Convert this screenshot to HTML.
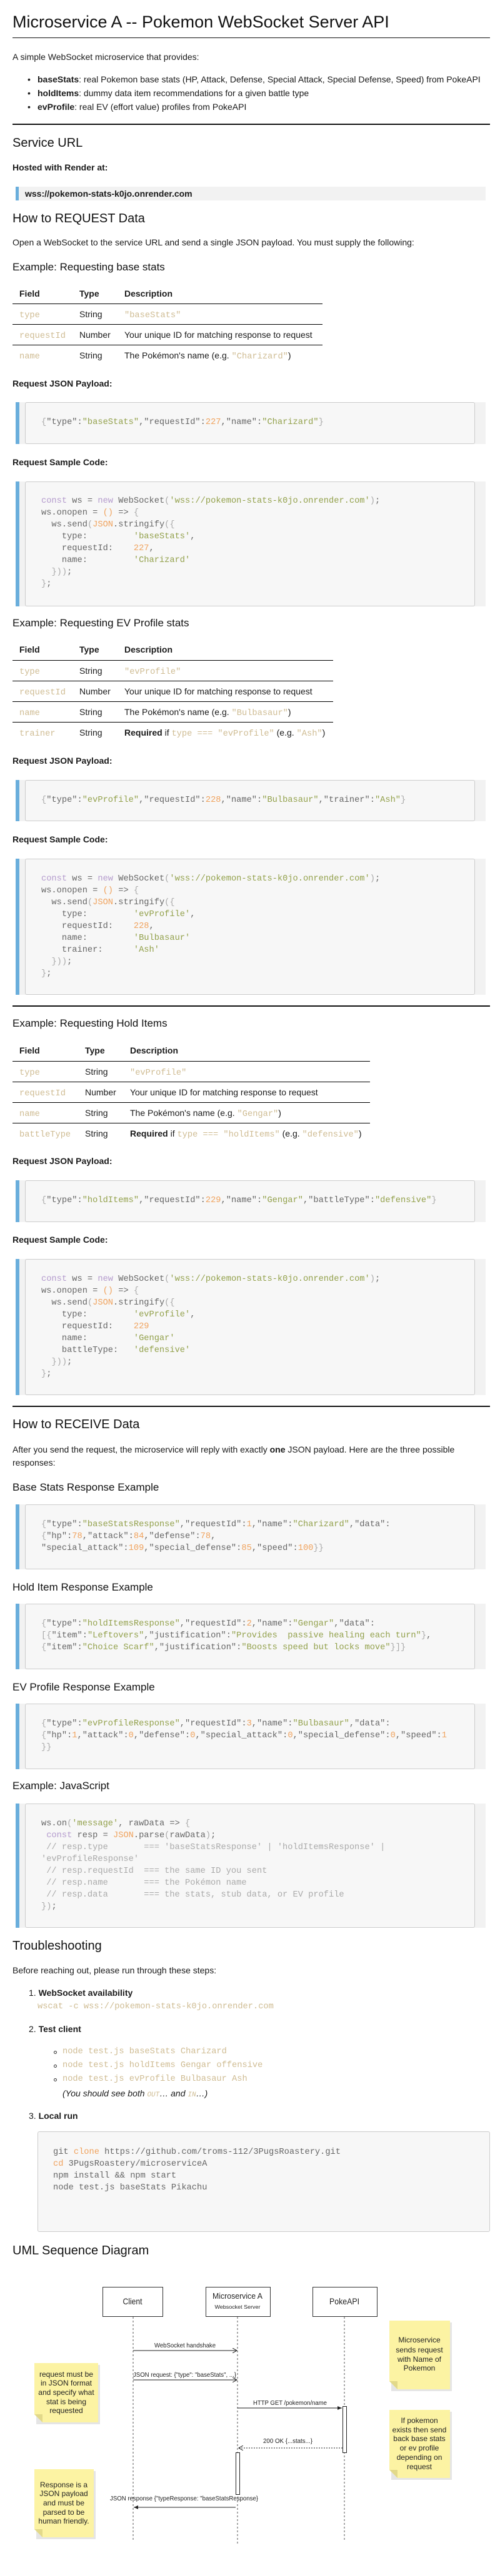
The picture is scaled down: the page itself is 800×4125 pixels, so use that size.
<!DOCTYPE html>
<html><head><meta charset="utf-8">
<style>
*{margin:0;padding:0;box-sizing:border-box}
html,body{width:800px;height:4125px;background:#fff;overflow:hidden}
body{position:relative;font-family:"Liberation Sans",sans-serif;color:#1a1a1a}
.a{position:absolute;line-height:1;white-space:nowrap}
.t{font-size:14px}
.b{font-weight:bold}
.h1{font-size:27px;color:#111}
.h2{font-size:20px;color:#111}
.h3{font-size:17px;color:#111}
.m{font-family:"Liberation Mono",monospace;font-size:13.7px}
.tan{color:#cfbc93}
.hr{position:absolute;left:20px;width:764px;background:#111}
.tl{position:absolute;left:20px;height:1px;background:#000}
.cb{position:absolute;left:25px;width:752px;background:#f2f2f2;border-left:6px solid #6aaedc}
.cb .in,.lr .in{position:absolute;left:9px;right:17px;top:0;bottom:0;background:#f7f7f7;border:1px solid #ccc;border-radius:3px}
.l{position:absolute;left:35px;font-family:"Liberation Mono",monospace;font-size:13.7px;line-height:1;white-space:pre;color:#666}
.s{color:#93a14c}.n{color:#f0a35e}.k{color:#b49bcd}.p{color:#aaa}.c{color:#aaa}
.lr{position:absolute;left:60px;width:724px;height:161px;background:#f7f7f7;border:1px solid #ccc;border-radius:3px}
.lr .l{left:24px}
</style></head><body>

<div class="a h1" style="left:20px;top:22px">Microservice A -- Pokemon WebSocket Server API</div>
<div class="hr" style="top:60px;height:1px"></div>
<div class="a t" style="left:20px;top:84px">A simple WebSocket microservice that provides:</div>
<div class="a t" style="left:44px;top:120px">•</div>
<div class="a t" style="left:60px;top:120px"><b>baseStats</b>: real Pokemon base stats (HP, Attack, Defense, Special Attack, Special Defense, Speed) from PokeAPI</div>
<div class="a t" style="left:44px;top:142px">•</div>
<div class="a t" style="left:60px;top:142px"><b>holdItems</b>: dummy data item recommendations for a given battle type</div>
<div class="a t" style="left:44px;top:164px">•</div>
<div class="a t" style="left:60px;top:164px"><b>evProfile</b>: real EV (effort value) profiles from PokeAPI</div>
<div class="hr" style="top:198px;height:2px"></div>

<div class="a h2" style="left:20px;top:219px">Service URL</div>
<div class="a t b" style="left:20px;top:261px">Hosted with Render at:</div>
<div style="position:absolute;left:25px;top:299px;width:752px;height:22px;background:#f2f2f2;border-left:5px solid #6aaedc"></div>
<div class="a t b" style="left:40px;top:303px">wss://pokemon-stats-k0jo.onrender.com</div>

<div class="a h2" style="left:20px;top:340px">How to REQUEST Data</div>
<div class="a t" style="left:20px;top:381px">Open a WebSocket to the service URL and send a single JSON payload. You must supply the following:</div>

<div class="a h3" style="left:20px;top:419px">Example: Requesting base stats</div>
<div class="a t b" style="left:31px;top:463px">Field</div>
<div class="a t b" style="left:127px;top:463px">Type</div>
<div class="a t b" style="left:199px;top:463px">Description</div>
<div class="tl" style="top:486px;width:496px"></div>
<div class="tl" style="top:519px;width:496px"></div>
<div class="tl" style="top:552px;width:496px"></div>
<div class="a t" style="left:31px;top:496px"><span class="m tan">type</span></div>
<div class="a t" style="left:127px;top:496px">String</div>
<div class="a t" style="left:199px;top:496px"><span class="m tan">"baseStats"</span></div>
<div class="a t" style="left:31px;top:529px"><span class="m tan">requestId</span></div>
<div class="a t" style="left:127px;top:529px">Number</div>
<div class="a t" style="left:199px;top:529px">Your unique ID for matching response to request</div>
<div class="a t" style="left:31px;top:562px"><span class="m tan">name</span></div>
<div class="a t" style="left:127px;top:562px">String</div>
<div class="a t" style="left:199px;top:562px">The Pokémon's name (e.g. <span class="m tan">"Charizard"</span>)</div>

<div class="a t b" style="left:20px;top:607px">Request JSON Payload:</div>
<div class="cb" style="top:644px;height:67px"><div class="in"></div>
<div class="l" style="top:26px"><span class="p">{</span>"type":<span class="s">"baseStats"</span>,"requestId":<span class="n">227</span>,"name":<span class="s">"Charizard"</span><span class="p">}</span></div></div>

<div class="a t b" style="left:20px;top:733px">Request Sample Code:</div>
<div class="cb" style="top:771px;height:200px"><div class="in"></div>
<div class="l" style="top:25px"><span class="k">const</span> ws = <span class="k">new</span> WebSocket<span class="p">(</span><span class="s">'wss://pokemon-stats-k0jo.onrender.com'</span><span class="p">)</span>;</div>
<div class="l" style="top:44px">ws.onopen = <span class="n">()</span> =&gt; <span class="p">{</span></div>
<div class="l" style="top:63px">  ws.send<span class="p">(</span><span class="n">JSON</span>.stringify<span class="p">({</span></div>
<div class="l" style="top:82px">    type:         <span class="s">'baseStats'</span>,</div>
<div class="l" style="top:101px">    requestId:    <span class="n">227</span>,</div>
<div class="l" style="top:120px">    name:         <span class="s">'Charizard'</span></div>
<div class="l" style="top:139px">  <span class="p">}))</span>;</div>
<div class="l" style="top:158px"><span class="p">}</span>;</div></div>

<div class="a h3" style="left:20px;top:989px">Example: Requesting EV Profile stats</div>
<div class="a t b" style="left:31px;top:1033px">Field</div>
<div class="a t b" style="left:127px;top:1033px">Type</div>
<div class="a t b" style="left:199px;top:1033px">Description</div>
<div class="tl" style="top:1057px;width:513px"></div>
<div class="tl" style="top:1090px;width:513px"></div>
<div class="tl" style="top:1123px;width:513px"></div>
<div class="tl" style="top:1156px;width:513px"></div>
<div class="a t" style="left:31px;top:1067px"><span class="m tan">type</span></div>
<div class="a t" style="left:127px;top:1067px">String</div>
<div class="a t" style="left:199px;top:1067px"><span class="m tan">"evProfile"</span></div>
<div class="a t" style="left:31px;top:1100px"><span class="m tan">requestId</span></div>
<div class="a t" style="left:127px;top:1100px">Number</div>
<div class="a t" style="left:199px;top:1100px">Your unique ID for matching response to request</div>
<div class="a t" style="left:31px;top:1133px"><span class="m tan">name</span></div>
<div class="a t" style="left:127px;top:1133px">String</div>
<div class="a t" style="left:199px;top:1133px">The Pokémon's name (e.g. <span class="m tan">"Bulbasaur"</span>)</div>
<div class="a t" style="left:31px;top:1166px"><span class="m tan">trainer</span></div>
<div class="a t" style="left:127px;top:1166px">String</div>
<div class="a t" style="left:199px;top:1166px"><b>Required</b> if <span class="m tan">type === "evProfile"</span> (e.g. <span class="m tan">"Ash"</span>)</div>

<div class="a t b" style="left:20px;top:1211px">Request JSON Payload:</div>
<div class="cb" style="top:1249px;height:66px"><div class="in"></div>
<div class="l" style="top:26px"><span class="p">{</span>"type":<span class="s">"evProfile"</span>,"requestId":<span class="n">228</span>,"name":<span class="s">"Bulbasaur"</span>,"trainer":<span class="s">"Ash"</span><span class="p">}</span></div></div>

<div class="a t b" style="left:20px;top:1337px">Request Sample Code:</div>
<div class="cb" style="top:1375px;height:218px"><div class="in"></div>
<div class="l" style="top:26px"><span class="k">const</span> ws = <span class="k">new</span> WebSocket<span class="p">(</span><span class="s">'wss://pokemon-stats-k0jo.onrender.com'</span><span class="p">)</span>;</div>
<div class="l" style="top:45px">ws.onopen = <span class="n">()</span> =&gt; <span class="p">{</span></div>
<div class="l" style="top:64px">  ws.send<span class="p">(</span><span class="n">JSON</span>.stringify<span class="p">({</span></div>
<div class="l" style="top:83px">    type:         <span class="s">'evProfile'</span>,</div>
<div class="l" style="top:102px">    requestId:    <span class="n">228</span>,</div>
<div class="l" style="top:121px">    name:         <span class="s">'Bulbasaur'</span></div>
<div class="l" style="top:140px">    trainer:      <span class="s">'Ash'</span></div>
<div class="l" style="top:159px">  <span class="p">}))</span>;</div>
<div class="l" style="top:178px"><span class="p">}</span>;</div></div>
<div class="hr" style="top:1610px;height:2px"></div>

<div class="a h3" style="left:20px;top:1630px">Example: Requesting Hold Items</div>
<div class="a t b" style="left:31px;top:1675px">Field</div>
<div class="a t b" style="left:136px;top:1675px">Type</div>
<div class="a t b" style="left:208px;top:1675px">Description</div>
<div class="tl" style="top:1699px;width:572px"></div>
<div class="tl" style="top:1732px;width:572px"></div>
<div class="tl" style="top:1765px;width:572px"></div>
<div class="tl" style="top:1798px;width:572px"></div>
<div class="a t" style="left:31px;top:1709px"><span class="m tan">type</span></div>
<div class="a t" style="left:136px;top:1709px">String</div>
<div class="a t" style="left:208px;top:1709px"><span class="m tan">"evProfile"</span></div>
<div class="a t" style="left:31px;top:1742px"><span class="m tan">requestId</span></div>
<div class="a t" style="left:136px;top:1742px">Number</div>
<div class="a t" style="left:208px;top:1742px">Your unique ID for matching response to request</div>
<div class="a t" style="left:31px;top:1775px"><span class="m tan">name</span></div>
<div class="a t" style="left:136px;top:1775px">String</div>
<div class="a t" style="left:208px;top:1775px">The Pokémon's name (e.g. <span class="m tan">"Gengar"</span>)</div>
<div class="a t" style="left:31px;top:1808px"><span class="m tan">battleType</span></div>
<div class="a t" style="left:136px;top:1808px">String</div>
<div class="a t" style="left:208px;top:1808px"><b>Required</b> if <span class="m tan">type === "holdItems"</span> (e.g. <span class="m tan">"defensive"</span>)</div>

<div class="a t b" style="left:20px;top:1852px">Request JSON Payload:</div>
<div class="cb" style="top:1890px;height:67px"><div class="in"></div>
<div class="l" style="top:26px"><span class="p">{</span>"type":<span class="s">"holdItems"</span>,"requestId":<span class="n">229</span>,"name":<span class="s">"Gengar"</span>,"battleType":<span class="s">"defensive"</span><span class="p">}</span></div></div>

<div class="a t b" style="left:20px;top:1978px">Request Sample Code:</div>
<div class="cb" style="top:2016px;height:218px"><div class="in"></div>
<div class="l" style="top:26px"><span class="k">const</span> ws = <span class="k">new</span> WebSocket<span class="p">(</span><span class="s">'wss://pokemon-stats-k0jo.onrender.com'</span><span class="p">)</span>;</div>
<div class="l" style="top:45px">ws.onopen = <span class="n">()</span> =&gt; <span class="p">{</span></div>
<div class="l" style="top:64px">  ws.send<span class="p">(</span><span class="n">JSON</span>.stringify<span class="p">({</span></div>
<div class="l" style="top:83px">    type:         <span class="s">'evProfile'</span>,</div>
<div class="l" style="top:102px">    requestId:    <span class="n">229</span></div>
<div class="l" style="top:121px">    name:         <span class="s">'Gengar'</span></div>
<div class="l" style="top:140px">    battleType:   <span class="s">'defensive'</span></div>
<div class="l" style="top:159px">  <span class="p">}))</span>;</div>
<div class="l" style="top:178px"><span class="p">}</span>;</div></div>
<div class="hr" style="top:2251px;height:2px"></div>

<div class="a h2" style="left:20px;top:2271px">How to RECEIVE Data</div>
<div class="a t" style="left:20px;top:2314px">After you send the request, the microservice will reply with exactly <b>one</b> JSON payload. Here are the three possible</div>
<div class="a t" style="left:20px;top:2335px">responses:</div>

<div class="a h3" style="left:20px;top:2373px">Base Stats Response Example</div>
<div class="cb" style="top:2409px;height:104px"><div class="in"></div>
<div class="l" style="top:26px"><span class="p">{</span>"type":<span class="s">"baseStatsResponse"</span>,"requestId":<span class="n">1</span>,"name":<span class="s">"Charizard"</span>,"data":</div>
<div class="l" style="top:45px"><span class="p">{</span>"hp":<span class="n">78</span>,"attack":<span class="n">84</span>,"defense":<span class="n">78</span>,</div>
<div class="l" style="top:64px">"special_attack":<span class="n">109</span>,"special_defense":<span class="n">85</span>,"speed":<span class="n">100</span><span class="p">}}</span></div></div>

<div class="a h3" style="left:20px;top:2533px">Hold Item Response Example</div>
<div class="cb" style="top:2568px;height:105px"><div class="in"></div>
<div class="l" style="top:26px"><span class="p">{</span>"type":<span class="s">"holdItemsResponse"</span>,"requestId":<span class="n">2</span>,"name":<span class="s">"Gengar"</span>,"data":</div>
<div class="l" style="top:45px"><span class="p">[{</span>"item":<span class="s">"Leftovers"</span>,"justification":<span class="s">"Provides  passive healing each turn"</span><span class="p">}</span>,</div>
<div class="l" style="top:64px"><span class="p">{</span>"item":<span class="s">"Choice Scarf"</span>,"justification":<span class="s">"Boosts speed but locks move"</span><span class="p">}]}</span></div></div>

<div class="a h3" style="left:20px;top:2693px">EV Profile Response Example</div>
<div class="cb" style="top:2728px;height:105px"><div class="in"></div>
<div class="l" style="top:26px"><span class="p">{</span>"type":<span class="s">"evProfileResponse"</span>,"requestId":<span class="n">3</span>,"name":<span class="s">"Bulbasaur"</span>,"data":</div>
<div class="l" style="top:45px"><span class="p">{</span>"hp":<span class="n">1</span>,"attack":<span class="n">0</span>,"defense":<span class="n">0</span>,"special_attack":<span class="n">0</span>,"special_defense":<span class="n">0</span>,"speed":<span class="n">1</span></div>
<div class="l" style="top:64px"><span class="p">}}</span></div></div>

<div class="a h3" style="left:20px;top:2851px">Example: JavaScript</div>
<div class="cb" style="top:2888px;height:199px"><div class="in"></div>
<div class="l" style="top:26px">ws.on<span class="p">(</span><span class="s">'message'</span>, rawData =&gt; <span class="p">{</span></div>
<div class="l" style="top:45px"> <span class="k">const</span> resp = <span class="n">JSON</span>.parse<span class="p">(</span>rawData<span class="p">)</span>;</div>
<div class="l c" style="top:64px"> // resp.type       === 'baseStatsResponse' | 'holdItemsResponse' |</div>
<div class="l c" style="top:83px">'evProfileResponse'</div>
<div class="l c" style="top:102px"> // resp.requestId  === the same ID you sent</div>
<div class="l c" style="top:121px"> // resp.name       === the Pokémon name</div>
<div class="l c" style="top:140px"> // resp.data       === the stats, stub data, or EV profile</div>
<div class="l" style="top:159px"><span class="p">})</span>;</div></div>

<div class="a h2" style="left:20px;top:3106px">Troubleshooting</div>
<div class="a t" style="left:20px;top:3148px">Before reaching out, please run through these steps:</div>
<div class="a t" style="left:46px;top:3184px">1. <b>WebSocket availability</b></div>
<div class="a m tan" style="left:60px;top:3207px">wscat -c wss://pokemon-stats-k0jo.onrender.com</div>
<div class="a t" style="left:46px;top:3242px">2. <b>Test client</b></div>
<div style="position:absolute;left:86px;top:3284px;width:5px;height:5px;border:1px solid #333;border-radius:50%"></div>
<div class="a m tan" style="left:100px;top:3279px">node test.js baseStats Charizard</div>
<div style="position:absolute;left:86px;top:3306px;width:5px;height:5px;border:1px solid #333;border-radius:50%"></div>
<div class="a m tan" style="left:100px;top:3301px">node test.js holdItems Gengar offensive</div>
<div style="position:absolute;left:86px;top:3328px;width:5px;height:5px;border:1px solid #333;border-radius:50%"></div>
<div class="a m tan" style="left:100px;top:3323px">node test.js evProfile Bulbasaur Ash</div>
<div class="a t" style="left:100px;top:3345px;font-style:italic">(You should see both <span class="m tan" style="font-size:11px">OUT</span>… and <span class="m tan" style="font-size:11px">IN</span>…)</div>
<div class="a t" style="left:46px;top:3381px">3. <b>Local run</b></div>
<div class="lr" style="top:3413px">
<div class="l" style="top:26px">git <span class="n">clone</span> https://github.com/troms-112/3PugsRoastery.git</div>
<div class="l" style="top:45px"><span class="n">cd</span> 3PugsRoastery/microserviceA</div>
<div class="l" style="top:64px">npm install &amp;&amp; npm start</div>
<div class="l" style="top:83px">node test.js baseStats Pikachu</div></div>

<div class="a h2" style="left:20px;top:3594px">UML Sequence Diagram</div>

<svg style="position:absolute;left:0;top:3600px" width="800" height="525" viewBox="0 0 800 525" font-family="Liberation Sans, sans-serif">
<defs>
<marker id="op" markerWidth="8" markerHeight="8" refX="7" refY="4" orient="auto"><path d="M0,0 L7,4 L0,8" fill="none" stroke="#222" stroke-width="1"/></marker>
<marker id="fl" markerWidth="8" markerHeight="8" refX="7" refY="4" orient="auto"><path d="M0,1 L7,4 L0,7 Z" fill="#222"/></marker>
</defs>
<g stroke="#333" fill="#fff" stroke-width="1">
<rect x="164.5" y="62.5" width="96" height="47"/>
<rect x="329.5" y="62.5" width="103" height="47"/>
<rect x="500.5" y="62.5" width="103" height="47"/>
</g>
<g stroke="#555" stroke-dasharray="3,3" stroke-width="1">
<line x1="213" y1="110" x2="213" y2="470"/>
<line x1="380" y1="110" x2="380" y2="475"/>
<line x1="551" y1="110" x2="551" y2="470"/>
</g>
<g fill="#222" text-anchor="middle">
<text x="212" y="90" font-size="14" textLength="31" lengthAdjust="spacingAndGlyphs">Client</text>
<text x="380" y="81" font-size="13" textLength="80" lengthAdjust="spacingAndGlyphs">Microservice A</text>
<text x="380" y="97" font-size="8.5" textLength="73" lengthAdjust="spacingAndGlyphs">Websocket Server</text>
<text x="551" y="90" font-size="14" textLength="48" lengthAdjust="spacingAndGlyphs">PokeAPI</text>
</g>
<g stroke="#222" stroke-width="1" fill="none">
<line x1="213" y1="164" x2="379" y2="164" marker-end="url(#op)"/>
<line x1="213" y1="211" x2="379" y2="211" marker-end="url(#op)"/>
<line x1="380" y1="256" x2="547" y2="256" marker-end="url(#fl)"/>
<line x1="548" y1="320" x2="382" y2="320" stroke-dasharray="2,2" marker-end="url(#op)"/>
<line x1="377" y1="415" x2="214" y2="415" marker-end="url(#fl)"/>
<rect x="548.5" y="253.5" width="6" height="74" fill="#fff"/>
<rect x="377.5" y="327.5" width="6" height="67" fill="#fff"/>
</g>
<g fill="#222" font-size="10.5">
<text x="247" y="159" textLength="98" lengthAdjust="spacingAndGlyphs">WebSocket handshake</text>
<text x="213" y="206" textLength="165" lengthAdjust="spacingAndGlyphs">JSON request: {"type": "baseStats", ...}</text>
<text x="405" y="251" textLength="118" lengthAdjust="spacingAndGlyphs">HTTP GET /pokemon/name</text>
<text x="421" y="312" textLength="79" lengthAdjust="spacingAndGlyphs">200 OK {...stats...}</text>
<text x="176" y="404" textLength="237" lengthAdjust="spacingAndGlyphs">JSON response {"typeResponse: "baseStatsResponse}</text>
</g>
<g>
<rect x="58" y="187" width="102" height="95" fill="#ccc" opacity=".5"/>
<polygon points="55,184 157,184 157,279 68,279 55,266" fill="#fcf3a3"/>
<polygon points="55,266 68,266 68,279" fill="#e2d98a"/>
<rect x="58" y="357" width="95" height="109" fill="#ccc" opacity=".5"/>
<polygon points="55,354 150,354 150,463 68,463 55,450" fill="#fcf3a3"/>
<polygon points="55,450 68,450 68,463" fill="#e2d98a"/>
<rect x="626" y="119" width="97" height="110" fill="#ccc" opacity=".5"/>
<polygon points="623,116 720,116 720,226 636,226 623,213" fill="#fcf3a3"/>
<polygon points="623,213 636,213 636,226" fill="#e2d98a"/>
<rect x="626" y="262" width="97" height="109" fill="#ccc" opacity=".5"/>
<polygon points="623,259 720,259 720,368 636,368 623,355" fill="#fcf3a3"/>
<polygon points="623,355 636,355 636,368" fill="#e2d98a"/>
</g>
<g fill="#222" font-size="12" text-anchor="middle">
<text x="106" y="206">request must be</text>
<text x="106" y="220">in JSON format</text>
<text x="106" y="235">and specify what</text>
<text x="106" y="250">stat is being</text>
<text x="106" y="264">requested</text>
<text x="102" y="383">Response is a</text>
<text x="102" y="397">JSON payload</text>
<text x="102" y="412">and must be</text>
<text x="102" y="427">parsed to be</text>
<text x="102" y="441">human friendly.</text>
<text x="671" y="151">Microservice</text>
<text x="671" y="167">sends request</text>
<text x="671" y="182">with Name of</text>
<text x="671" y="196">Pokemon</text>
<text x="671" y="280">If pokemon</text>
<text x="671" y="295">exists then send</text>
<text x="671" y="309">back base stats</text>
<text x="671" y="324">or ev profile</text>
<text x="671" y="339">depending on</text>
<text x="671" y="354">request</text>
</g>
</svg>
</body></html>
